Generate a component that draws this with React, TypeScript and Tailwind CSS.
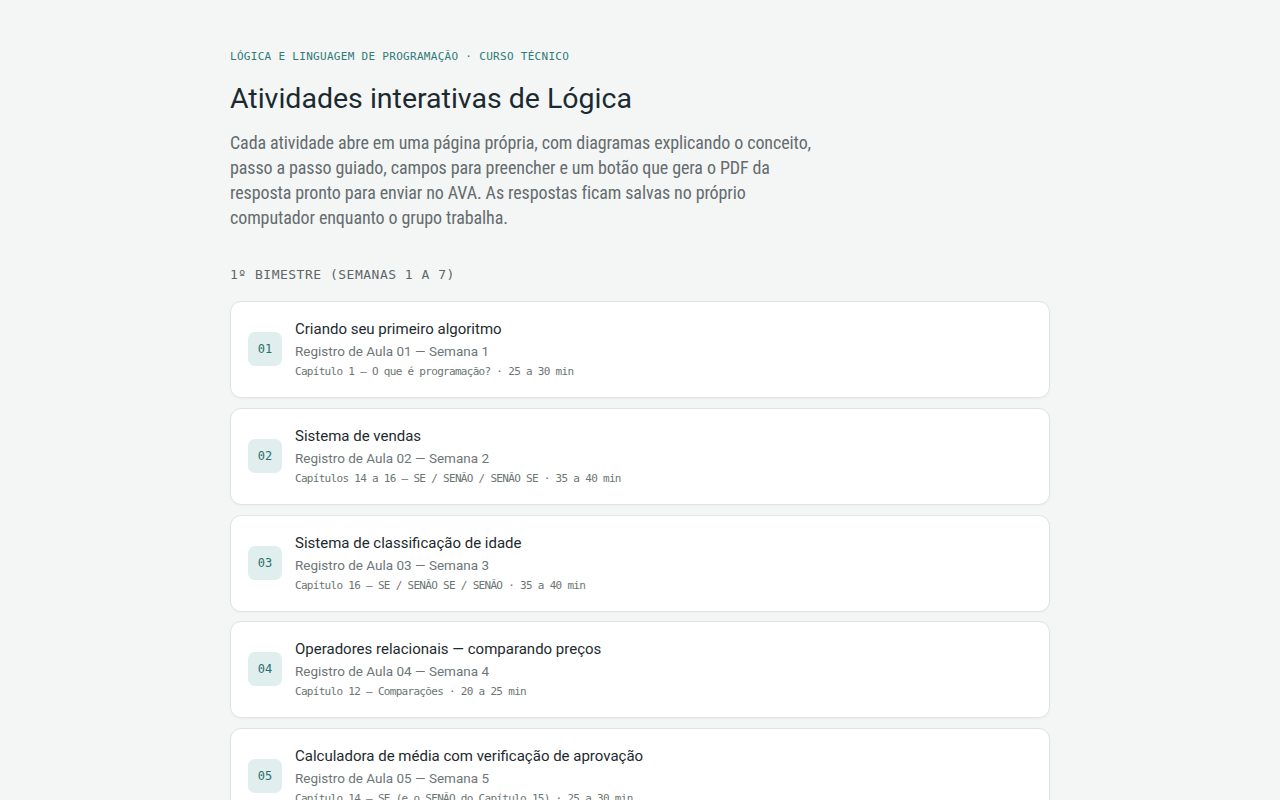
const atividades = [
  {
    num: "01",
    titulo: "Criando seu primeiro algoritmo",
    registro: "Registro de Aula 01 — Semana 1",
    detalhe: "Capítulo 1 – O que é programação? · 25 a 30 min",
  },
  {
    num: "02",
    titulo: "Sistema de vendas",
    registro: "Registro de Aula 02 — Semana 2",
    detalhe: "Capítulos 14 a 16 – SE / SENÃO / SENÃO SE · 35 a 40 min",
  },
  {
    num: "03",
    titulo: "Sistema de classificação de idade",
    registro: "Registro de Aula 03 — Semana 3",
    detalhe: "Capítulo 16 – SE / SENÃO SE / SENÃO · 35 a 40 min",
  },
  {
    num: "04",
    titulo: "Operadores relacionais — comparando preços",
    registro: "Registro de Aula 04 — Semana 4",
    detalhe: "Capítulo 12 – Comparações · 20 a 25 min",
  },
  {
    num: "05",
    titulo: "Calculadora de média com verificação de aprovação",
    registro: "Registro de Aula 05 — Semana 5",
    detalhe: "Capítulo 14 – SE (e o SENÃO do Capítulo 15) · 25 a 30 min",
  },
];

function CartaoAtividade({
  num,
  titulo,
  registro,
  detalhe,
}: {
  num: string;
  titulo: string;
  registro: string;
  detalhe: string;
}) {
  return (
    <a
      href="#"
      className="flex items-center gap-[13px] rounded-[11px] border border-[#dfe4e3] bg-white py-4 pl-[17px] pr-6 shadow-[0_1px_2px_rgba(20,40,40,0.04)]"
    >
      <div className="-mt-px flex h-[34px] w-[34px] shrink-0 items-center justify-center rounded-[7px] bg-[#e1eeee] font-['DejaVu_Sans_Mono',monospace] text-[12px] text-[#2a6f6d]">
        {num}
      </div>
      <div className="flex flex-col">
        <div className="font-['Roboto',sans-serif] text-[15px] leading-[22px] text-[#1d2a2f]">
          {titulo}
        </div>
        <div className="font-['Roboto',sans-serif] text-[13.5px] leading-[22px] text-[#6d7678]">
          {registro}
        </div>
        <div className="mt-px font-['DejaVu_Sans_Mono',monospace] text-[11px] leading-[18px] tracking-[-0.7px] text-[#6b7572]">
          {detalhe}
        </div>
      </div>
    </a>
  );
}

export default function App() {
  return (
    <div className="min-h-screen bg-[#f4f6f5]">
      <main className="mx-auto w-[820px] pt-[49px] pb-16">
        <p className="font-['DejaVu_Sans_Mono',monospace] text-[11px] leading-4 tracking-[0.3px] text-[#2f7b78] uppercase">
          Lógica e Linguagem de Programação · Curso Técnico
        </p>
        <h1 className="mt-4 font-['Roboto',sans-serif] text-[28.5px] leading-9 font-normal text-[#1b2a30]">
          Atividades interativas de Lógica
        </h1>
        <p className="mt-[13px] max-w-[600px] font-['Roboto_Condensed','Liberation_Sans',sans-serif] text-[18px] leading-[25px] tracking-[-0.1px] text-[#636c6f]">
          Cada atividade abre em uma página própria, com diagramas explicando o conceito,
          passo a passo guiado, campos para preencher e um botão que gera o PDF da
          resposta pronto para enviar no AVA. As respostas ficam salvas no próprio
          computador enquanto o grupo trabalha.
        </p>

        <section className="mt-[35px]">
          <h2 className="font-['DejaVu_Sans_Mono',monospace] text-[13px] leading-5 tracking-[0.5px] text-[#5d6769]">
            1º BIMESTRE (SEMANAS 1 A 7)
          </h2>
          <div className="mt-4 flex flex-col gap-[9.75px]">
            {atividades.map((a) => (
              <CartaoAtividade key={a.num} {...a} />
            ))}
          </div>
        </section>
      </main>
    </div>
  );
}
